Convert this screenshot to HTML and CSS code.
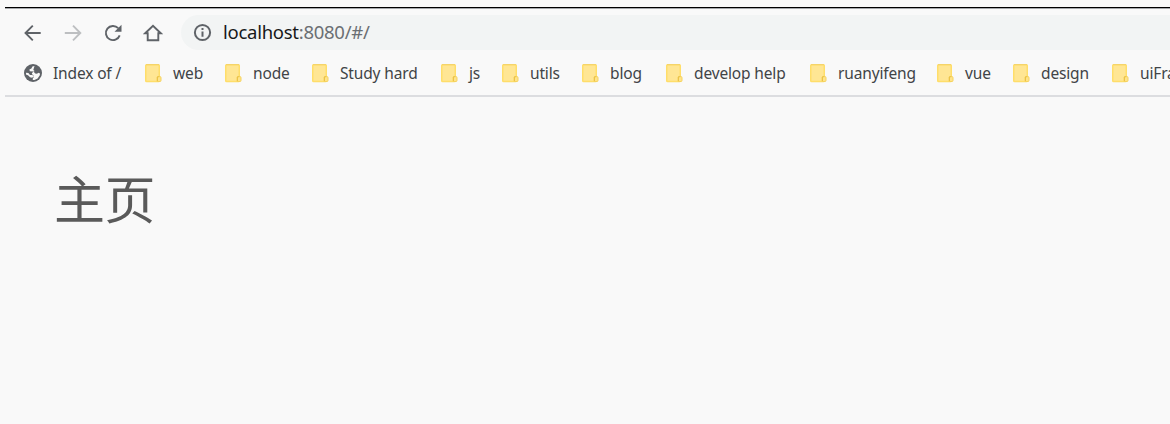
FILE: index.html
```html
<!DOCTYPE html>
<html lang="zh">
<head>
<meta charset="utf-8">
<title>主页</title>
<link rel="stylesheet" href="styles.css">
</head>
<body>
<svg class="defs" width="0" height="0" aria-hidden="true">
<symbol id="folder" viewBox="0 0 17 19">
<rect x=".75" y=".75" width="13.5" height="16.8" rx=".8" fill="#ffe694" stroke="#ffde6a" stroke-width="1.5"/>
<path d="M1 .6h13" stroke="#f5d36a" stroke-width="1.1"/>
<path d="M12.6 12.5h2.2q1.2 0 1.2 1.2v2.8q0 1-1 1h-3V13.2z" fill="#ffe48a" stroke="#f6d35f" stroke-width="1"/>
<path d="M12.5 17v-4.2h1.8" fill="none" stroke="#e9c043" stroke-width=".9"/>
</symbol>
</svg>
<header class="browser">
<div class="toolbar">
<nav class="nav">
<svg class="nav-icon" viewBox="0 0 20 20"><path d="M17.7 10H2.8M9.8 2.7L2.5 10l7.3 7.3"/></svg>
<svg class="nav-icon disabled" viewBox="0 0 20 20"><path d="M1.8 10h15.1M10 2.7l7.3 7.3-7.3 7.3"/></svg>
<svg class="nav-icon" viewBox="0 0 20 20"><path d="M16.7 12.4A7.1 7.1 0 1 1 15.2 5.2"/><path class="solid" d="M18.5 1.8v7h-7z"/></svg>
<svg class="nav-icon" viewBox="0 0 20 20"><path d="M2.2 10.3L10 2.8l7.8 7.5h-2.5V17.3H4.7v-7z"/></svg>
</nav>
<div class="address">
<svg class="info" viewBox="0 0 18 18"><circle cx="9" cy="9" r="7.2"/><path d="M9 8v5M9 4.8v1.9"/></svg>
<span class="url"><span class="host">localhost</span>:8080/#/</span>
</div>
</div>
<div class="bookmarks">
<a class="bookmark index"><svg class="globe" viewBox="0 0 20 20"><circle cx="10" cy="10" r="9"/><path d="M11.5 3L9.4 3.5 8.4 5.4 6.4 6.6 6.8 8.2 10.5 8.5 12.2 10.6 14 10.8 15.4 9.8 17 10.5 16.8 12.2 14.6 15.6 11.5 17 9.8 17V15.5L11 13.8 9.4 12.1H7L5.4 10 2.9 9.7 3.2 11.7 5 12.3 7 14.3 9 14.7 10.6 13.8 10.4 12.3 8.8 11.1 9.2 9.7 11.6 8 10.3 6.9z"/></svg><span>Index of /</span></a>
<a class="bookmark web"><svg class="folder"><use href="#folder"/></svg><span>web</span></a>
<a class="bookmark node"><svg class="folder"><use href="#folder"/></svg><span>node</span></a>
<a class="bookmark study"><svg class="folder"><use href="#folder"/></svg><span>Study hard</span></a>
<a class="bookmark js"><svg class="folder"><use href="#folder"/></svg><span>js</span></a>
<a class="bookmark utils"><svg class="folder"><use href="#folder"/></svg><span>utils</span></a>
<a class="bookmark blog"><svg class="folder"><use href="#folder"/></svg><span>blog</span></a>
<a class="bookmark help"><svg class="folder"><use href="#folder"/></svg><span>develop help</span></a>
<a class="bookmark ruanyifeng"><svg class="folder"><use href="#folder"/></svg><span>ruanyifeng</span></a>
<a class="bookmark vue"><svg class="folder"><use href="#folder"/></svg><span>vue</span></a>
<a class="bookmark design"><svg class="folder"><use href="#folder"/></svg><span>design</span></a>
<a class="bookmark frame"><svg class="folder"><use href="#folder"/></svg><span>uiFra</span></a>
</div>
</header>
<main class="page"><h1>主页</h1></main>
</body>
</html>
```

FILE: styles.css
```css
* { box-sizing: border-box; }
body { margin: 0; height: 424px; overflow: hidden; background: #f9f9f9; font-family: "Noto Sans", "Noto Sans CJK SC", sans-serif; }
.defs { display: block; }
.browser { margin: 7px 0 0 5px; height: 90px; border-top: 1px solid #000; border-bottom: 2px solid #dcdde0; box-shadow: inset 0 1px 0 #a5a8ac; }
.toolbar { display: flex; align-items: center; height: 42px; padding: 7px 0 0 18px; }
.nav { display: flex; gap: 20px; width: 158px; flex: none; }
.nav-icon { width: 20px; height: 20px; fill: none; stroke: #5f6368; stroke-width: 1.9; }
.nav-icon .solid { fill: #5f6368; stroke: none; }
.nav-icon.disabled { stroke: #bdbfc1; }
.address { flex: 1; display: flex; align-items: center; height: 35px; padding-left: 12px; border-radius: 18px 0 0 18px; background: #f2f4f4; }
.info { width: 19px; height: 19px; fill: none; stroke: #5f6368; stroke-width: 1.9; }
.url { margin-left: 11px; padding-bottom: 2px; font-size: 18.5px; line-height: 32px; color: #6b6f73; white-space: nowrap; letter-spacing: -.27px; }
.host { color: #17181a; }
.bookmarks { display: flex; align-items: center; height: 46px; padding-left: 18px; overflow: hidden; }
.bookmark { display: flex; align-items: center; flex: none; font-size: 15.5px; line-height: 24px; letter-spacing: -.15px; color: #414447; white-space: nowrap; }
.folder { width: 17px; height: 19px; margin-right: 11px; flex: none; }
.globe { width: 20px; height: 20px; margin-right: 10px; flex: none; fill: #5f6368; }
.globe path { fill: #f9f9f9; }
.index { width: 122px; }
.web { width: 80px; }
.node { width: 87px; }
.study { width: 129px; }
.js { width: 61px; }
.utils { width: 80px; }
.blog { width: 84px; }
.help { width: 144px; }
.ruanyifeng { width: 127px; }
.vue { width: 76px; }
.design { width: 99px; }
.page { padding: 64px 0 0 54px; }
h1 { margin: 0; font: 400 51px/72px "Noto Sans CJK SC", sans-serif; letter-spacing: -.5px; color: #5a5a5a; }
```
